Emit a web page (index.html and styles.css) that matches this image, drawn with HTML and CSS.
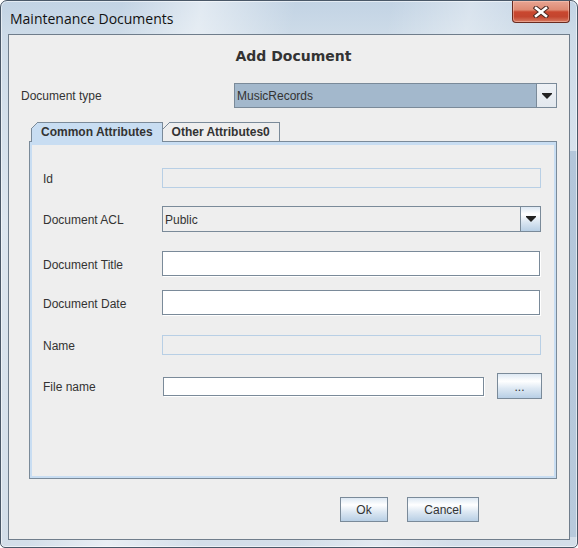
FILE: index.html
```html
<!DOCTYPE html>
<html>
<head>
<meta charset="utf-8">
<title>Maintenance Documents</title>
<link rel="stylesheet" href="styles.css">
</head>
<body>
<div class="window">
  <div class="titlebar">
    <span class="caption">Maintenance Documents</span>
    <div class="close">
      <svg width="16" height="12" viewBox="0 0 16 12">
        <path d="M3 2 L13 10 M13 2 L3 10" stroke="#4a2a24" stroke-width="4.6" stroke-linecap="square" fill="none"/>
        <path d="M3 2 L13 10 M13 2 L3 10" stroke="#ffffff" stroke-width="2.6" stroke-linecap="square" fill="none"/>
      </svg>
    </div>
  </div>
  <div class="client">
    <h1 class="heading">Add Document</h1>
    <div class="doctype-row">
      <span class="label doctype-label">Document type</span>
      <div class="combo combo-active">
        <span class="combo-value">MusicRecords</span>
        <span class="combo-arrow combo-arrow-flat">
          <svg width="10" height="6" viewBox="0 0 10 6"><polygon points="0,0 10,0 10,1 5,6 0,1" fill="#222"/></svg>
        </span>
      </div>
    </div>
    <div class="tabpane">
      <div class="tabs">
        <div class="tab tab-selected">Common Attributes</div>
        <div class="tab tab-next">Other Attributes0</div>
      </div>
      <div class="tab-content">
        <div class="tab-body">
          <div class="row row-id">
            <span class="label">Id</span>
            <div class="field field-disabled"></div>
          </div>
          <div class="row row-acl">
            <span class="label">Document ACL</span>
            <div class="combo">
              <span class="combo-value">Public</span>
              <span class="combo-arrow">
                <svg width="10" height="6" viewBox="0 0 10 6"><polygon points="0,0 10,0 10,1 5,6 0,1" fill="#222"/></svg>
              </span>
            </div>
          </div>
          <div class="row row-title">
            <span class="label">Document Title</span>
            <div class="field field-input"></div>
          </div>
          <div class="row row-date">
            <span class="label">Document Date</span>
            <div class="field field-input"></div>
          </div>
          <div class="row row-name">
            <span class="label">Name</span>
            <div class="field field-disabled"></div>
          </div>
          <div class="row row-file">
            <span class="label">File name</span>
            <div class="field field-input field-file"></div>
            <button class="btn btn-browse">...</button>
          </div>
        </div>
      </div>
    </div>
    <div class="actions">
      <button class="btn btn-ok">Ok</button>
      <button class="btn btn-cancel">Cancel</button>
    </div>
  </div>
</div>
</body>
</html>
```

FILE: styles.css
```css
* { box-sizing: border-box; }

html, body {
  margin: 0;
  padding: 0;
}

body {
  width: 578px;
  height: 548px;
  overflow: hidden;
  background: #ffffff;
  font-family: "Liberation Sans", Arial, sans-serif;
}

.window {
  width: 578px;
  height: 548px;
  border: 1px solid #4a5868;
  border-radius: 7px 7px 5px 5px;
  padding: 0 7px 7px 7px;
  display: flex;
  flex-direction: column;
  background:
    linear-gradient(#b3c6da, #b8cadc) right 0 top 150px / 7px calc(100% - 160px) no-repeat,
    linear-gradient(100deg, rgba(255,255,255,0) 18%, rgba(255,255,255,0.5) 30%, rgba(255,255,255,0) 44%, rgba(255,255,255,0) 58%, rgba(255,255,255,0.35) 70%, rgba(255,255,255,0) 82%),
    linear-gradient(180deg, #c2d3e4 0%, #cddbe8 6%, #dde6ef 40%, #d3dee9 100%);
  box-shadow: inset 0 0 0 1px rgba(255,255,255,0.55);
}

.titlebar {
  height: 33px;
  display: flex;
  justify-content: space-between;
  align-items: flex-start;
}

.caption {
  font-family: "Open Sans", "Noto Sans", sans-serif;
  font-size: 14px;
  line-height: 17px;
  color: #111111;
  padding: 9px 0 0 2px;
}

.close {
  width: 58px;
  height: 22px;
  border: 1px solid #6a2b20;
  border-top: none;
  border-radius: 0 0 4px 4px;
  background: linear-gradient(#e8a593 0%, #de8a73 42%, #c9472f 52%, #c3452f 75%, #d77b62 100%);
  box-shadow: inset 0 0 0 1px rgba(255, 210, 195, 0.45);
  display: flex;
  align-items: center;
  justify-content: center;
}

.client {
  flex: 1;
  border: 1px solid #6f7d8b;
  background: #eeeeee;
  display: flex;
  flex-direction: column;
  padding: 0 12px;
}

.heading {
  margin: 13px 0 0;
  padding-left: 9px;
  font-family: "DejaVu Sans", sans-serif;
  font-weight: bold;
  font-size: 14px;
  line-height: 16px;
  text-align: center;
  color: #333333;
}

.label {
  font-size: 12px;
  color: #333333;
  flex: none;
  padding-top: 2px;
}

.doctype-row {
  display: flex;
  align-items: center;
  height: 25px;
  margin-top: 19px;
}

.doctype-label {
  width: 213px;
  padding-top: 1px;
}

.combo {
  flex: 1;
  height: 100%;
  display: flex;
  border: 1px solid #7a8a99;
  background: #eeeeee;
}

.combo-active {
  background: #a3b8cc;
}

.combo-value {
  flex: 1;
  display: flex;
  align-items: center;
  padding: 1px 0 0 2px;
  font-size: 12px;
  color: #333333;
}

.combo-arrow {
  width: 20px;
  border-left: 1px solid #7a8a99;
  background: linear-gradient(#dde8f3 0%, #ffffff 30%, #dde8f3 60%, #b8cfe5 100%);
  display: flex;
  align-items: center;
  justify-content: center;
}

.combo-arrow-flat {
  width: 20px;
  background: linear-gradient(#eef1f5, #e2e8ee);
}

.tabpane {
  margin: 14px 0 0 8px;
  display: flex;
  flex-direction: column;
}

.tabs {
  display: flex;
  height: 19px;
  padding-left: 2px;
}

.tab {
  position: relative;
  border-top: 1px solid #7a8a99;
  border-right: 1px solid #7a8a99;
  padding: 0 9px;
  display: flex;
  align-items: center;
  font-weight: bold;
  font-size: 12px;
  color: #333333;
  background: #eeeeee;
}

.tab::before {
  content: "";
  position: absolute;
  top: -1px;
  left: 0;
  width: 7px;
  height: 7px;
  background: linear-gradient(to bottom right, #eeeeee 0, #eeeeee calc(50% - 0.7px), #7a8a99 calc(50% - 0.7px), #7a8a99 calc(50% + 0.7px), transparent calc(50% + 0.7px));
}

.tab-selected {
  border-left: 1px solid #7a8a99;
  background: #c8ddf2;
  margin-bottom: -1px;
  padding-bottom: 1px;
  z-index: 1;
}

.tab-selected::before {
  left: -1px;
}

.tab-content {
  height: 338px;
  border: 1px solid #7a8a99;
}

.tab-body {
  height: 100%;
  border-style: solid;
  border-color: #c8ddf2;
  border-width: 3px 2px 2px 2px;
  padding: 0 13px 0 11px;
  display: flex;
  flex-direction: column;
}

.row {
  display: flex;
  align-items: center;
}

.row .label {
  width: 119px;
}

.row-id { margin-top: 23px; height: 20px; }
.row-acl { margin-top: 18px; height: 26px; }
.row-title { margin-top: 19px; height: 26px; }
.row-date { margin-top: 13px; height: 26px; }
.row-name { margin-top: 19px; height: 20px; }
.row-file { margin-top: 18px; height: 26px; }

.field {
  flex: 1;
  height: 100%;
}

.field-disabled {
  border: 1px solid #b8cfe5;
  background: #eeeeee;
}

.field-input {
  align-self: flex-start;
  height: 25px;
  margin-right: 1px;
  border: 1px solid #7a8a99;
  background: #ffffff;
  box-shadow: 1px 1px 0 #ffffff;
}

.field-file {
  align-self: center;
  height: 19px;
  margin-left: 1px;
  margin-right: 13px;
}

.btn {
  border: 1px solid #7a8a99;
  background: linear-gradient(#dde8f3 0%, #ffffff 30%, #dde8f3 60%, #b8cfe5 100%);
  font-family: "Liberation Sans", Arial, sans-serif;
  font-size: 12px;
  color: #333333;
  padding: 1px 0 0;
  margin: 0;
}

.btn-browse {
  width: 45px;
  height: 26px;
  flex: none;
  margin-right: -1px;
}

.actions {
  display: flex;
  justify-content: flex-end;
  gap: 19px;
  margin-top: 18px;
  padding-right: 78px;
}

.btn-ok {
  width: 48px;
  height: 25px;
}

.btn-cancel {
  width: 72px;
  height: 25px;
}
```
